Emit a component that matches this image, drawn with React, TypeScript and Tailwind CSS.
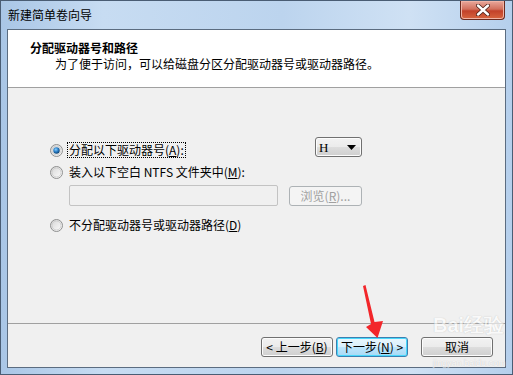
import React from "react";

const font = "font-['Noto_Sans_CJK_SC','Noto_Sans',sans-serif]";

const Radio = ({ checked }: { checked?: boolean }) => (
  <svg width="13" height="13" viewBox="0 0 13 13" className="shrink-0">
    <defs>
      <linearGradient id={checked ? "rg1" : "rg0"} x1="0" y1="0" x2="1" y2="1">
        <stop offset="0" stopColor="#d4d4d4" />
        <stop offset="1" stopColor="#ffffff" />
      </linearGradient>
      <radialGradient id="dot" cx="0.4" cy="0.35" r="0.7">
        <stop offset="0" stopColor="#8ad0ff" />
        <stop offset="0.5" stopColor="#2a7fc8" />
        <stop offset="1" stopColor="#0b3a66" />
      </radialGradient>
    </defs>
    <circle cx="6.5" cy="6.5" r="6" fill={`url(#${checked ? "rg1" : "rg0"})`} stroke="#8e8f8f" />
    <circle cx="6.5" cy="6.5" r="4.5" fill="none" stroke="#c9c9c9" strokeWidth="0.8" />
    {checked && <circle cx="6.5" cy="6.5" r="3.2" fill="url(#dot)" />}
  </svg>
);

const WinButton = ({
  children,
  focused,
  disabled,
  className = "",
}: {
  children: React.ReactNode;
  focused?: boolean;
  disabled?: boolean;
  className?: string;
}) => (
  <div
    className={`flex h-[20px] items-center justify-center rounded-[3px] border text-[12px] leading-none ${
      disabled
        ? "border-[#adb2b5] bg-[#f4f4f4] text-[#a0a0a0]"
        : focused
        ? "border-[#3c7fb1] bg-[linear-gradient(#eaf6fd,#d9f0fc_50%,#bee6fd_51%,#a7d9f5)] text-black shadow-[inset_0_0_0_1px_#48d8fb]"
        : "border-[#707070] bg-[linear-gradient(#f2f2f2,#ebebeb_50%,#dddddd_51%,#cfcfcf)] text-black shadow-[inset_0_0_0_1px_#fcfcfc]"
    } ${className}`}
  >
    {children}
  </div>
);

export default function App() {
  return (
    <div
      className={`relative flex h-[375px] w-[513px] flex-col overflow-hidden border border-[#4a5d74] bg-[linear-gradient(90deg,#a9c6e6,#c7dcf2_20%,#bcd4ee_55%,#cfe1f4_80%,#b5cfec)] ${font}`}
    >
      {/* title bar */}
      <div className="flex h-[28px] shrink-0 items-start justify-between">
        <div className="pl-[7px] pt-[6px] text-[12px] leading-[16px] text-black">新建简单卷向导</div>
        <div className="mr-[7px] flex h-[19px] w-[45px] items-center justify-center rounded-b-[4px] border border-t-0 border-[#6b2a1f] bg-[linear-gradient(#e9a89c,#d2705d_45%,#c2412a_55%,#d7653f)] shadow-[inset_0_0_0_1px_#f0b4a6]">
          <svg width="14" height="12" viewBox="0 0 14 12">
            <path d="M2 1.5 L12 10.5 M12 1.5 L2 10.5" stroke="#4a1e16" strokeWidth="4" strokeLinecap="round" />
            <path d="M2 1.5 L12 10.5 M12 1.5 L2 10.5" stroke="#ffffff" strokeWidth="2.4" strokeLinecap="round" />
          </svg>
        </div>
      </div>

      {/* client area */}
      <div className="mx-[6px] mb-[6px] flex flex-1 flex-col border border-[#5b6c80] bg-[#f0f0f0]">
        <div className="h-[58px] shrink-0 border-b border-[#a0a0a0] bg-white">
          <div className="pl-[22px] pt-[10px] text-[12px] font-bold leading-[16px] text-black">
            分配驱动器号和路径
          </div>
          <div className="pl-[47px] text-[12px] leading-[15px] text-black">
            为了便于访问，可以给磁盘分区分配驱动器号或驱动器路径。
          </div>
        </div>

        <div className="flex-1 pt-[49px]">
          <div className="ml-[42px] w-[312px] text-[12px] leading-none text-black">
            <div className="flex items-start justify-between">
              <div className="mt-[3px] flex h-[20px] items-center gap-[4px]">
                <Radio checked />
                <span className="border border-dotted border-black px-[1px] py-[1px]">
                  分配以下驱动器号(<u>A</u>):
                </span>
              </div>
              <div className="flex h-[20px] w-[47px] items-center justify-between rounded-[3px] border border-[#707070] bg-[linear-gradient(#f2f2f2,#ebebeb_50%,#dddddd_51%,#cfcfcf)] px-[3px] shadow-[inset_0_0_0_1px_#fcfcfc]">
                <span className="font-['Liberation_Serif',serif] text-[13px]">H</span>
                <svg width="9" height="5" viewBox="0 0 9 5" className="mr-[2px]">
                  <path d="M0 0 H9 L4.5 5 Z" fill="#000" />
                </svg>
              </div>
            </div>

            <div className="mt-[2px] flex h-[20px] items-center gap-[4px]">
              <Radio />
              <span className="pl-[2px]">
                装入以下空白 NTFS 文件夹中(<u>M</u>):
              </span>
            </div>

            <div className="mt-[3px] flex h-[21px] items-center">
              <div className="ml-[19px] h-[21px] w-[209px] rounded-[2px] border border-[#c3c3c3] bg-[#f0f0f0]" />
              <WinButton disabled className="ml-[11px] h-[19px] w-[73px]">
                浏览(<u>R</u>)...
              </WinButton>
            </div>

            <div className="mt-[9px] flex h-[20px] items-center gap-[4px]">
              <Radio />
              <span className="pl-[2px]">
                不分配驱动器号或驱动器路径(<u>D</u>)
              </span>
            </div>
          </div>
        </div>

        {/* footer */}
        <div className="h-[44px] shrink-0 border-t border-[#a0a0a0]">
          <div className="flex pt-[13px] pl-[253px]">
            <WinButton className="w-[72px]">&lt; 上一步(<u>B</u>)</WinButton>
            <WinButton focused className="ml-[3px] w-[72px]">
              下一步(<u>N</u>) &gt;
            </WinButton>
            <WinButton className="ml-[13px] w-[72px]">取消</WinButton>
          </div>
        </div>
      </div>

      {/* watermark */}
      <div className="pointer-events-none absolute left-[432px] top-[314px] font-['Liberation_Sans',sans-serif] text-[20px] font-bold leading-none text-white opacity-60 [text-shadow:0_0_1px_#9a9a9a]">
        Bai经验
      </div>
      <div className="pointer-events-none absolute left-[432px] top-[358px] font-['Liberation_Sans',sans-serif] text-[9px] leading-none text-white opacity-60 [text-shadow:0_0_1px_#9a9a9a]">
        jingyan.baidu.com
      </div>

      {/* red arrow annotation */}
      <svg className="pointer-events-none absolute left-0 top-0" width="513" height="375">
        <polygon
          points="362,285 364.5,284 373.5,321 382,320 376.5,337 365,326 370,323"
          fill="#f2262a"
        />
      </svg>
    </div>
  );
}
